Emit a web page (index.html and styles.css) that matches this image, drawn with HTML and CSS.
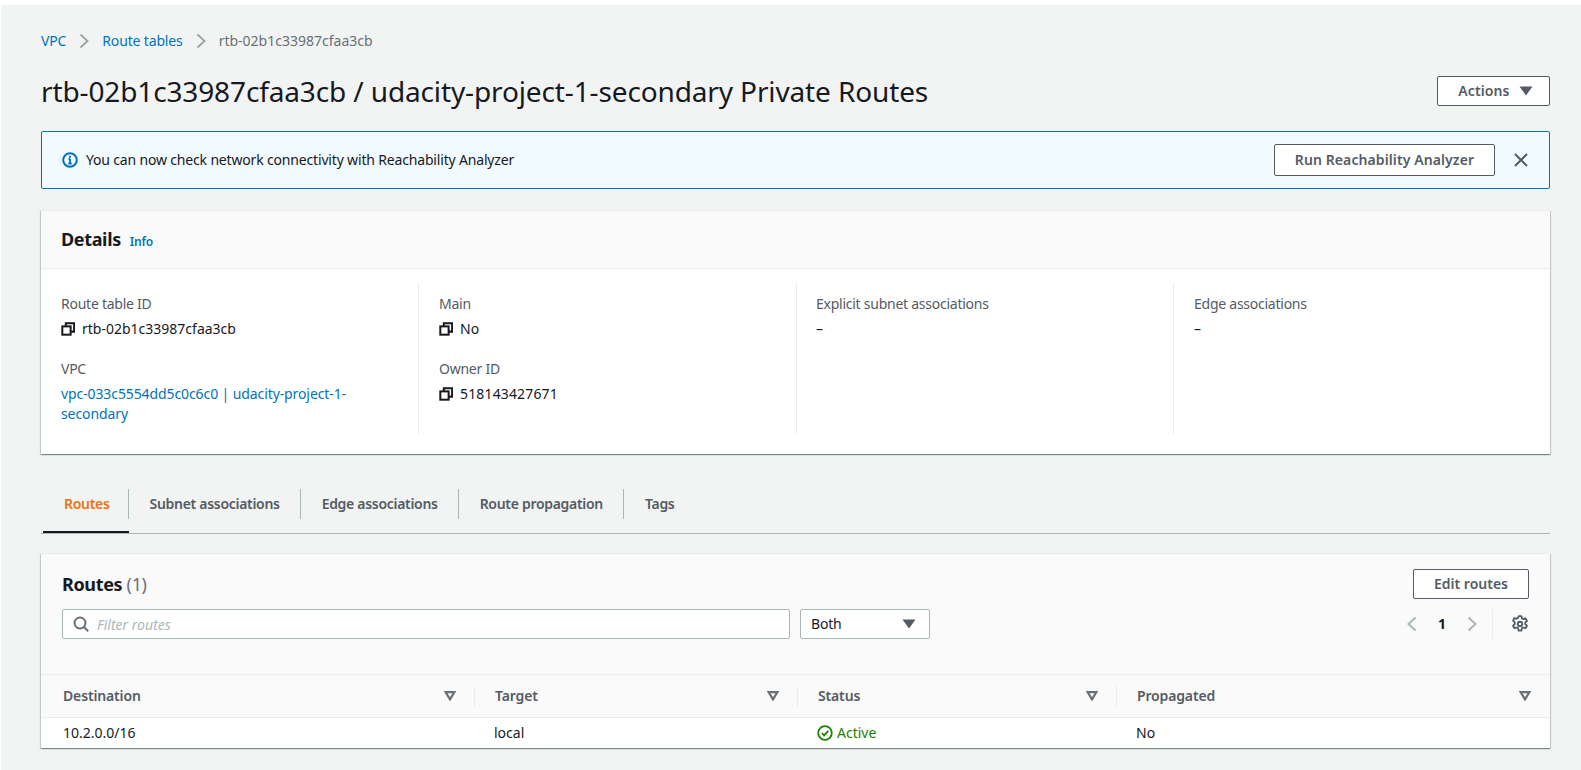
FILE: index.html
```html
<!DOCTYPE html>
<html lang="en">
<head>
    <meta charset="UTF-8">
    <title>rtb-02b1c33987cfaa3cb / udacity-project-1-secondary Private Routes</title>
    <link rel="stylesheet" href="styles.css">
</head>
<body>
    <svg class="defs" width="0" height="0">
        <symbol id="copy" viewBox="0 0 16 16">
            <path d="M5.5 5V1.5H15V11H11" fill="none" stroke="currentColor" stroke-width="2.3"/>
            <rect x="1.5" y="5" width="9.5" height="9.5" fill="none" stroke="currentColor" stroke-width="2.3"/>
        </symbol>
        <symbol id="sort" viewBox="0 0 12 10">
            <path d="M1.7 1.2h8.6L6 8.4z" fill="none" stroke="currentColor" stroke-width="2.2" stroke-linejoin="miter"/>
        </symbol>
        <symbol id="caret" viewBox="0 0 14 10">
            <path d="M0.5 0.5h13L7 9.5z" fill="currentColor"/>
        </symbol>
    </svg>

    <div class="page">
        <nav class="breadcrumbs">
            <a href="#">VPC</a>
            <svg class="crumb-sep" viewBox="0 0 10 16"><path d="M1.5 1.5L8.5 8l-7 6.5" fill="none" stroke="currentColor" stroke-width="1.8"/></svg>
            <a href="#">Route tables</a>
            <svg class="crumb-sep" viewBox="0 0 10 16"><path d="M1.5 1.5L8.5 8l-7 6.5" fill="none" stroke="currentColor" stroke-width="1.8"/></svg>
            <span class="crumb-current">rtb-02b1c33987cfaa3cb</span>
        </nav>

        <header class="page-head">
            <h1>rtb-02b1c33987cfaa3cb / udacity-project-1-secondary Private Routes</h1>
            <button class="btn btn-actions">Actions <svg class="caret"><use href="#caret"/></svg></button>
        </header>

        <div class="flash">
            <svg class="flash-icon" viewBox="0 0 16 16">
                <circle cx="8" cy="8" r="6.8" fill="none" stroke="currentColor" stroke-width="2"/>
                <path d="M8 7v4.5M6.3 11.5h3.4M6.5 7H8" fill="none" stroke="currentColor" stroke-width="1.8"/>
                <rect x="7" y="3.8" width="2" height="1.9" fill="currentColor"/>
            </svg>
            <span class="flash-text">You can now check network connectivity with Reachability Analyzer</span>
            <button class="btn btn-run">Run Reachability Analyzer</button>
            <svg class="flash-close" viewBox="0 0 16 16"><path d="M2 2l12 12M14 2L2 14" fill="none" stroke="currentColor" stroke-width="2"/></svg>
        </div>

        <section class="card details">
            <div class="card-head">
                <h2>Details</h2>
                <a class="info" href="#">Info</a>
            </div>
            <div class="details-grid">
                <div class="col">
                    <div class="field">
                        <div class="label">Route table ID</div>
                        <div class="value"><svg class="copy"><use href="#copy"/></svg>rtb-02b1c33987cfaa3cb</div>
                    </div>
                    <div class="field">
                        <div class="label">VPC</div>
                        <div class="value"><a href="#">vpc-033c5554dd5c0c6c0 | udacity-project-1-secondary</a></div>
                    </div>
                </div>
                <div class="col">
                    <div class="field">
                        <div class="label">Main</div>
                        <div class="value"><svg class="copy"><use href="#copy"/></svg>No</div>
                    </div>
                    <div class="field">
                        <div class="label">Owner ID</div>
                        <div class="value digits"><svg class="copy"><use href="#copy"/></svg>518143427671</div>
                    </div>
                </div>
                <div class="col">
                    <div class="field">
                        <div class="label">Explicit subnet associations</div>
                        <div class="value">–</div>
                    </div>
                </div>
                <div class="col">
                    <div class="field">
                        <div class="label">Edge associations</div>
                        <div class="value">–</div>
                    </div>
                </div>
            </div>
        </section>

        <div class="tabs">
            <a class="tab active" href="#">Routes</a>
            <a class="tab" href="#">Subnet associations</a>
            <a class="tab" href="#">Edge associations</a>
            <a class="tab" href="#">Route propagation</a>
            <a class="tab" href="#">Tags</a>
        </div>

        <section class="card routes">
            <div class="routes-head">
                <div class="routes-title">
                    <h2>Routes <span class="count">(1)</span></h2>
                    <button class="btn btn-edit">Edit routes</button>
                </div>
                <div class="routes-tools">
                    <div class="filter">
                        <svg class="search" viewBox="0 0 16 16"><circle cx="7" cy="7" r="5.5" fill="none" stroke="currentColor" stroke-width="2"/><path d="M11 11l4.2 4.2" fill="none" stroke="currentColor" stroke-width="2"/></svg>
                        <span class="placeholder">Filter routes</span>
                    </div>
                    <div class="select">Both <svg class="caret"><use href="#caret"/></svg></div>
                    <div class="pager">
                        <svg class="chev" viewBox="0 0 10 16"><path d="M8.5 1.5L1.5 8l7 6.5" fill="none" stroke="currentColor" stroke-width="2"/></svg>
                        <span class="page-num">1</span>
                        <svg class="chev" viewBox="0 0 10 16"><path d="M1.5 1.5L8.5 8l-7 6.5" fill="none" stroke="currentColor" stroke-width="2"/></svg>
                        <span class="pager-sep"></span>
                        <svg class="gear" viewBox="0 0 16 16">
                            <path d="M6.7 1h2.6l.4 2 1.3.7 1.9-.7 1.3 2.3-1.5 1.3v1.6l1.5 1.3-1.3 2.3-1.9-.7-1.3.7-.4 2H6.7l-.4-2-1.3-.7-1.9.7-1.3-2.3 1.5-1.3V6.3L1.8 5l1.3-2.3 1.9.7 1.3-.7z" fill="none" stroke="currentColor" stroke-width="1.6" stroke-linejoin="round"/>
                            <circle cx="8" cy="8" r="2" fill="none" stroke="currentColor" stroke-width="1.6"/>
                        </svg>
                    </div>
                </div>
            </div>
            <table class="routes-table">
                <colgroup>
                    <col class="c-dest"><col class="c-target"><col class="c-status"><col>
                </colgroup>
                <thead>
                    <tr>
                        <th><div class="th-in">Destination<svg class="sort"><use href="#sort"/></svg></div></th>
                        <th><div class="th-in">Target<svg class="sort"><use href="#sort"/></svg></div></th>
                        <th><div class="th-in">Status<svg class="sort"><use href="#sort"/></svg></div></th>
                        <th><div class="th-in">Propagated<svg class="sort"><use href="#sort"/></svg></div></th>
                    </tr>
                </thead>
                <tbody>
                    <tr>
                        <td>10.2.0.0/16</td>
                        <td>local</td>
                        <td class="active-status">
                            <svg class="ok" viewBox="0 0 16 16"><circle cx="8" cy="8" r="6.8" fill="none" stroke="currentColor" stroke-width="1.8"/><path d="M4.8 8l2.3 2.4 4.2-4.6" fill="none" stroke="currentColor" stroke-width="1.8"/></svg>Active
                        </td>
                        <td>No</td>
                    </tr>
                </tbody>
            </table>
        </section>
    </div>
</body>
</html>
```

FILE: styles.css
```css
html, body {
    margin: 0;
    height: 100%;
    background-color: #fff;
}
body {
    font-family: "Noto Sans", Arial, sans-serif;
    font-size: 14px;
    line-height: 20px;
    color: #16191f;
    padding: 5px 0 0 1px;
    box-sizing: border-box;
    overflow: hidden;
}
a {
    color: #0073bb;
    text-decoration: none;
}
h1, h2 {
    margin: 0;
}
.defs {
    position: absolute;
}
.page {
    height: 765px;
    background-color: #f2f3f3;
    padding: 26px 31px 0 40px;
    box-sizing: border-box;
}

/* breadcrumbs */
.breadcrumbs {
    display: flex;
    align-items: center;
    height: 20px;
    letter-spacing: -0.15px;
}
.crumb-sep {
    width: 10px;
    height: 16px;
    margin: 0 13px;
    color: #95a5a6;
}
.crumb-current {
    color: #687078;
    letter-spacing: 0;
}

/* title */
.page-head {
    display: flex;
    align-items: center;
    justify-content: space-between;
    margin-top: 20px;
    height: 40px;
}
.page-head h1 {
    font-size: 28px;
    line-height: 40px;
    font-weight: 400;
    letter-spacing: -0.13px;
}

/* buttons */
.btn {
    font-family: inherit;
    font-size: 14px;
    font-weight: 600;
    line-height: 20px;
    color: #545b64;
    background-color: #fff;
    border: 1px solid #545b64;
    border-radius: 2px;
    padding: 0;
    box-sizing: border-box;
    letter-spacing: 0.1px;
}
.btn-actions {
    display: flex;
    align-items: center;
    justify-content: center;
    gap: 9px;
    width: 113px;
    height: 30px;
    padding-left: 4px;
}
.caret {
    width: 14px;
    height: 10px;
    color: #545b64;
}

/* flash */
.flash {
    display: flex;
    align-items: center;
    height: 58px;
    margin-top: 20px;
    padding: 0 20px;
    background-color: #f1faff;
    border: 1px solid #0073bb;
    border-radius: 2px;
    box-sizing: border-box;
}
.flash-icon {
    width: 16px;
    height: 16px;
    color: #0073bb;
    margin-right: 8px;
}
.flash-text {
    flex: 1;
    letter-spacing: -0.17px;
}
.btn-run {
    width: 221px;
    height: 32px;
    margin-right: 18px;
}
.flash-close {
    width: 16px;
    height: 16px;
    color: #545b64;
}

/* cards */
.card {
    background-color: #fff;
    border-top: 1px solid #eaeded;
    box-shadow: 0 1px 1px 0 rgba(0,28,36,0.3), 1px 1px 1px 0 rgba(0,28,36,0.15), -1px 1px 1px 0 rgba(0,28,36,0.15);
}
.details {
    margin-top: 21px;
    height: 244px;
    box-sizing: border-box;
}
.card-head {
    display: flex;
    align-items: baseline;
    height: 57px;
    padding: 0 20px;
    background-color: #fafafa;
    border-bottom: 1px solid #eaeded;
    line-height: 56px;
}
.card h2 {
    font-size: 18px;
    font-weight: 700;
    letter-spacing: -0.35px;
}
.info {
    font-size: 12px;
    font-weight: 600;
    margin-left: 9px;
    letter-spacing: -0.2px;
}
.details-grid {
    display: grid;
    grid-template-columns: 378px 378px 377px 1fr;
    padding-top: 15px;
}
.col {
    height: 150px;
    box-sizing: border-box;
    padding: 10px 40px 0 20px;
    border-right: 1px solid #eaeded;
}
.col:nth-child(3) {
    padding-left: 19px;
}
.col:last-child {
    border-right: 0;
}
.field {
    margin-bottom: 20px;
}
.label {
    color: #545b64;
    margin-bottom: 5px;
    letter-spacing: -0.25px;
}
.value {
    display: flex;
    align-items: center;
}
.value a {
    letter-spacing: -0.1px;
}
.digits {
    letter-spacing: 0.15px;
}
.copy {
    width: 14px;
    height: 14px;
    margin-right: 7px;
    flex: none;
}

/* tabs */
.tabs {
    display: flex;
    align-items: flex-start;
    height: 50px;
    margin-top: 29px;
    border-bottom: 1px solid #aab7b8;
}
.tab {
    display: flex;
    align-items: center;
    font-weight: 600;
    color: #545b64;
    height: 30px;
    margin-top: 6px;
    padding: 0 20px 0 21px;
    position: relative;
    border-right: 1px solid #aab7b8;
    letter-spacing: -0.3px;
}
.tab:last-child {
    border-right: 0;
}
.tab.active {
    color: #ec7211;
    margin-left: 2px;
    padding-right: 18px;
}
.tab.active::after {
    content: "";
    position: absolute;
    left: 0;
    right: -1px;
    bottom: -14px;
    height: 2px;
    background-color: #16191f;
}

/* routes */
.routes {
    margin-top: 19px;
    height: 195px;
    box-sizing: border-box;
}
.routes-head {
    height: 121px;
    padding: 15px 21px 0 21px;
    background-color: #fafafa;
    border-bottom: 1px solid #eaeded;
    box-sizing: border-box;
}
.routes-title {
    display: flex;
    align-items: center;
    justify-content: space-between;
    height: 30px;
}
.routes-title h2 {
    line-height: 30px;
}
.count {
    font-weight: 400;
    color: #687078;
}
.btn-edit {
    width: 116px;
    height: 30px;
    letter-spacing: 0;
}
.routes-tools {
    display: flex;
    align-items: center;
    margin-top: 10px;
    height: 30px;
}
.filter {
    display: flex;
    align-items: center;
    width: 728px;
    height: 30px;
    background-color: #fff;
    border: 1px solid #aab7b8;
    border-radius: 2px;
    box-sizing: border-box;
    padding-left: 10px;
}
.search {
    width: 16px;
    height: 16px;
    color: #687078;
    margin-right: 8px;
}
.placeholder {
    font-style: italic;
    color: #aab7b8;
    padding-top: 1px;
}
.select {
    display: flex;
    align-items: center;
    justify-content: space-between;
    width: 130px;
    height: 30px;
    margin-left: 10px;
    padding: 0 13px 0 10px;
    background-color: #fff;
    border: 1px solid #aab7b8;
    border-radius: 2px;
    box-sizing: border-box;
    letter-spacing: -0.2px;
}
.pager {
    display: flex;
    align-items: center;
    margin-left: auto;
    height: 30px;
}
.chev {
    width: 10px;
    height: 16px;
    color: #aab7b8;
}
.page-num {
    font-weight: 700;
    width: 50px;
    text-align: center;
}
.pager-sep {
    width: 1px;
    height: 30px;
    background-color: #eaeded;
    margin: 0 18px 0 15px;
}
.gear {
    width: 18px;
    height: 18px;
    color: #545b64;
}

/* table */
.routes-table {
    width: 100%;
    table-layout: fixed;
    border-collapse: collapse;
}
.c-dest {
    width: 433px;
}
.c-target {
    width: 323px;
}
.c-status {
    width: 319px;
}
.routes-table th {
    height: 42px;
    padding: 0;
    background-color: #fafafa;
    border-bottom: 1px solid #eaeded;
    font-weight: 600;
    color: #545b64;
    text-align: left;
}
.th-in {
    display: flex;
    align-items: center;
    justify-content: space-between;
    height: 21px;
    padding: 0 18px 0 20px;
    border-left: 1px solid #eaeded;
    letter-spacing: -0.15px;
}
th:first-child .th-in {
    border-left: 0;
    padding-left: 22px;
}
th:last-child .th-in {
    padding-right: 19px;
}
.sort {
    width: 12px;
    height: 10px;
    color: #687078;
}
.routes-table td {
    height: 30px;
    padding: 0 0 0 20px;
    background-color: #fff;
}
.routes-table td:first-child {
    padding-left: 22px;
}
.active-status {
    color: #1d8102;
}
.ok {
    width: 16px;
    height: 16px;
    margin-right: 4px;
    vertical-align: -3px;
}
```
